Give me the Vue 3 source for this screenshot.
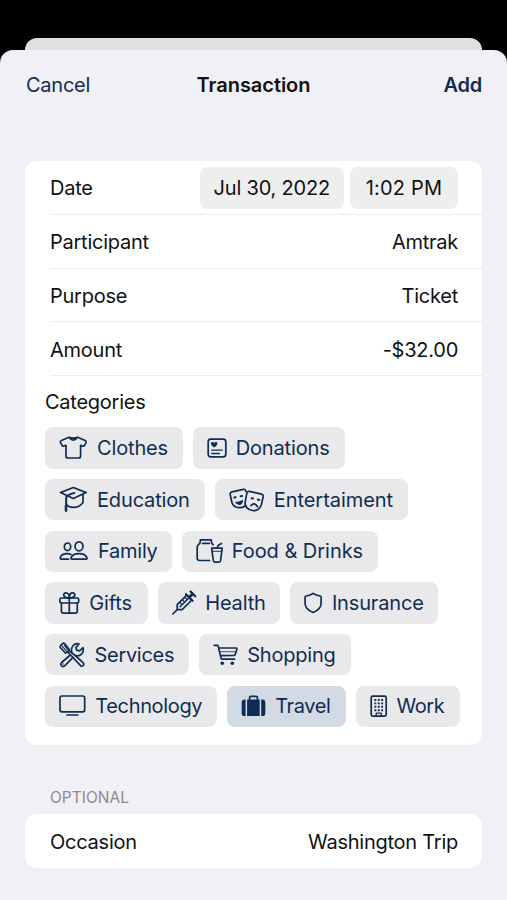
<script setup>
const rows = [
  { label: 'Participant', value: 'Amtrak' },
  { label: 'Purpose', value: 'Ticket' },
  { label: 'Amount', value: '-$32.00' }
]

// w: chip width, i: icon column width, s: letter spacing
const chipRows = [
  [
    { name: 'Clothes', w: 138, i: 38, s: -0.15 },
    { name: 'Donations', w: 152, i: 28.5, s: -0.15 }
  ],
  [
    { name: 'Education', w: 159.5, i: 38, s: -0.15 },
    { name: 'Entertaiment', w: 193, i: 45, s: -0.05 }
  ],
  [
    { name: 'Family', w: 127, i: 39, s: -0.25 },
    { name: 'Food & Drinks', w: 195.5, i: 35.5, s: -0.03 }
  ],
  [
    { name: 'Gifts', w: 102.5, i: 30.2, s: -0.15 },
    { name: 'Health', w: 122.5, i: 33.5, s: -0.15 },
    { name: 'Insurance', w: 147.5, i: 27.5, s: -0.15 }
  ],
  [
    { name: 'Services', w: 144, i: 35.5, s: -0.3 },
    { name: 'Shopping', w: 152, i: 34, s: -0.2 }
  ],
  [
    { name: 'Technology', w: 172, i: 36.3, s: -0.35 },
    { name: 'Travel', w: 118.5, i: 34, s: -0.4, selected: true },
    { name: 'Work', w: 104, i: 26.5, s: -0.35 }
  ]
]

const icons = {
  Clothes:
    '<path d="M10 3.2 2.4 6.5Q1 7.2 1.5 8.6L3.2 11.6Q3.7 12.5 4.6 12.1L7 11.3V22Q7 24 9 24H19.6Q21.6 24 21.6 22V11.3L24 12.1Q25 12.5 25.4 11.6L27 8.6Q27.5 7.2 26.2 6.5L18.6 3.2Q14.3 9.2 10 3.2ZM10 3.2Q14.3 5 18.6 3.2"/>',
  Donations:
    '<rect x="1.2" y="5.2" width="17.600" height="17.600" rx="2.500"/><path stroke-width="1.300" d="M4.700 16.200H15.200M4.700 19.500H12.500"/><path class="fill" d="M7.200 13.500C1.700 9.800 4.300 6.400 7.200 8.700C10.100 6.400 12.700 9.800 7.200 13.500Z"/>',
  Education:
    '<path d="M1.500 6.600 14.300 1.500 27.200 6.600 14.300 12.600ZM7.300 10V18.500Q10 21.400 14.400 21.400Q20.500 21.400 24 16.500V8.500M15.500 6.800Q8 8.500 7 12V24.800"/><path stroke-width="2.600" d="M7 20V24.500"/>',
  Entertaiment:
    '<path d="M17 5.500Q16.600 3 14.300 3.300L3 5.800Q.8 6.300 1.200 8.500L2.900 16.500Q4.500 21.400 10 21.700Q13.500 21.900 16 20"/><path d="M20.500 5.400Q18.300 5 17.800 7.300L16.100 16.500Q15.900 23.200 23.500 24.500Q29.800 25.200 32.300 19L34.200 10.500Q34.500 8.600 32.400 8.100Z"/><path stroke-width="2" d="M5.300 11.500 6.700 11.200M11.700 10.200 13.100 9.900M22.600 12.200 24 12.500M28.800 13.600 30.200 13.900"/><path d="M22 19.600Q25.400 15.700 28.500 20.700"/><path class="fill" d="M5.600 15.800Q10 16.300 14.100 13.800Q14 18.700 10.700 18.900Q7.600 19.100 5.600 15.800Z"/>',
  Family:
    '<ellipse cx="8.500" cy="9.800" rx="3.200" ry="3.800"/><ellipse cx="20" cy="9.300" rx="4" ry="4.500"/><path d="M9.500 22.200H2.400Q1 22.200 1.300 20.500Q2.500 16.700 8.500 16.700Q10.500 16.700 12 17.400M13 22.200H27Q28.400 22.200 27.900 20.600Q26.200 16.700 20 16.700Q13.800 16.700 12.100 20.600Q11.600 22.200 13 22.200Z"/>',
  'Food & Drinks':
    '<path d="M13.500 23.500H3.500Q1.200 23.500 1.200 21.200V10.500Q1.200 8.500 2.800 7.300Q4.300 6.300 4.300 4.500V2.800H15.300V4.500Q15.300 6.500 17.200 7.700M6.500 6.300H13.300M15.700 11.200H26.200L24.600 23.500Q24.400 25.100 22.900 25.100H19Q17.500 25.100 17.300 23.500ZM21.200 11 22 8.500 25.500 6.500"/><path d="M16.200 14.300H25.700" stroke-width="1.100"/>',
  Gifts:
    '<rect x=".9" y="9" width="18.800" height="5" rx="1.500"/><path d="M2.400 14V22Q2.400 24.100 4.500 24.100H16.200Q18.300 24.100 18.300 22V14M10.300 9V24M10.300 9C3.500 9.400 3.500 3.900 7 3.900C9.300 3.900 10.300 6.500 10.300 9C10.300 6.500 11.300 3.900 13.600 3.900C17.100 3.900 17.100 9.400 10.300 9"/>',
  Health:
    '<path d="M.8 25 5.200 20.600M14.200 6.600 5.200 15.600V20.600H10.200L19.300 11.500"/><path stroke-width="2.800" d="M17.500 8.100 20.700 4.900"/><path stroke-width="2.300" d="M14 5.300 20.500 11.800M18.500 2.500 23.200 7.200"/><path stroke-width="1.500" d="M16.200 9.600 8 17.800"/><path stroke-width="1.100" d="M10.500 11 12.200 12.700M13 8.500 14.700 10.200M8 13.500 9.700 15.200"/>',
  Insurance:
    '<path d="M9.100 4.300Q6.500 6.400 2.200 7Q1.100 7.200 1.100 8.300V14.500Q1.100 20.200 9.100 23.500Q17.100 20.200 17.100 14.500V8.300Q17.100 7.200 16 7Q11.700 6.400 9.100 4.300Z"/>',
  Services:
    '<path d="M11.300 14 2.600 21.500Q1 23.200 2.600 24.800Q4.200 26.300 5.900 24.700L14 16.300M16.500 14.700Q20.300 15.500 22.800 12.800Q25.100 10.200 24 6.700L20.600 9.900 17.600 9.200 16.900 6.300 20.100 3Q16.600 2 14.200 4.500Q11.700 7.300 12.800 11"/><path d="M6.600 12.300 1.500 6.700Q.7 5.700 1.600 4.700L3.600 2.600Q4.600 1.700 5.600 2.600L10.300 8.600Q9.400 11.300 6.600 12.300ZM9 11.500 13.500 16 21.600 24.700Q23 25.700 24.200 24.500Q25.300 23.300 24.300 21.900L16.200 14.500 10 9.800"/><path stroke-width="1.200" d="M3.300 5.400 7.500 10.200M5.200 4.200 9 8.900M3.900 23H4.500"/>',
  Shopping:
    '<path d="M1.200 4.300H4.200Q5 4.300 5.200 5.100L8 17Q8.300 18.200 9.500 18.200H21.500M5.700 7H23.100Q24.200 7 23.900 8.200L22.300 13.200Q22 14.200 20.800 14.300L7.500 14.700"/><path stroke-width=".8" d="M6.500 10.700H22.500"/><circle class="fill" cx="9.300" cy="22.200" r="1.800"/><circle class="fill" cx="19.300" cy="22.200" r="1.800"/>',
  Technology:
    '<rect x="1" y="4" width="24.700" height="15.800" rx="2"/><path d="M8 23H18.800"/>',
  Travel:
    '<path class="fill" d="M6.100 7.600H18.700V24.100H6.100ZM4.600 7.600V24.100H3.500Q.7 24.100.7 21.200V10.500Q.7 7.600 3.500 7.600ZM20.200 7.600V24.100H21.500Q24.300 24.100 24.300 21.200V10.500Q24.300 7.600 21.500 7.600Z"/><path d="M8.600 8V5.600Q8.600 4.300 9.900 4.300H15.100Q16.400 4.300 16.400 5.600V8"/>',
  Work:
    '<rect x="1.200" y="4.100" width="15" height="20" rx="1.500"/><path stroke-width="1.900" stroke-linecap="butt" d="M4.400 8H6.300M7.800 8H9.700M11.200 8H13.100M4.400 11.400H6.300M7.800 11.400H9.700M11.200 11.400H13.100M4.400 14.800H6.300M7.800 14.800H9.700M11.200 14.800H13.100M4.400 18.200H6.300M7.800 18.200H9.700M11.200 18.200H13.100"/><path stroke-width="1.300" d="M6.200 24V21.200H11.300V24"/>'
}
</script>

<template>
  <div class="screen">
    <div class="behind"></div>
    <main class="sheet">
      <header class="nav">
        <span class="cancel">Cancel</span>
        <h1 class="title">Transaction</h1>
        <span class="add">Add</span>
      </header>

      <section class="card">
        <div class="row date-row">
          <span>Date</span>
          <div class="pickers">
            <span class="picker day">Jul 30, 2022</span>
            <span class="picker time">1:02 PM</span>
          </div>
        </div>
        <div v-for="r in rows" :key="r.label" class="row">
          <span>{{ r.label }}</span>
          <span>{{ r.value }}</span>
        </div>
        <div class="categories">
          <h2 class="heading">Categories</h2>
          <div class="chips">
            <div v-for="(line, n) in chipRows" :key="n" class="chip-line">
              <div
                v-for="c in line"
                :key="c.name"
                class="chip"
                :class="{ selected: c.selected }"
                :style="{ width: c.w + 'px', letterSpacing: c.s + 'px' }"
              >
                <svg class="icon" :width="c.i" height="28" :viewBox="`0 0 ${c.i} 28`" v-html="icons[c.name]"></svg>
                <span>{{ c.name }}</span>
              </div>
            </div>
          </div>
        </div>
      </section>

      <h3 class="section-label">OPTIONAL</h3>
      <section class="card">
        <div class="row last">
          <span>Occasion</span>
          <span>Washington Trip</span>
        </div>
      </section>
    </main>
  </div>
</template>

<style>
body {
  background: #000;
}
</style>

<style scoped>
.screen {
  box-sizing: border-box;
  height: 900px;
  padding-top: 38px;
  overflow: hidden;
  display: flex;
  flex-direction: column;
  background: #000;
  color: #111;
  font-family: Inter, "Liberation Sans", sans-serif;
  font-size: 20px;
  letter-spacing: -0.25px;
}
.behind {
  flex: none;
  height: 12px;
  margin: 0 25px;
  border-radius: 12px 12px 0 0;
  background: #e0e0e0;
}
.sheet {
  flex: 1;
  padding: 0 25px;
  border-radius: 13px 13px 0 0;
  background: #f1f0f6;
}
.nav {
  display: grid;
  grid-template-columns: 1fr auto 1fr;
  align-items: center;
  height: 69px;
  margin-bottom: 42px;
  color: #0f2d54;
}
.cancel {
  padding-left: 1px;
}
.title {
  margin: 0;
  font-size: 20px;
  font-weight: 600;
  letter-spacing: -0.05px;
  color: #111;
}
.add {
  text-align: right;
  font-weight: 600;
}
.card {
  border-radius: 12px;
  background: #fff;
}
.row {
  box-sizing: border-box;
  height: 53.8px;
  margin-left: 25px;
  padding: 2px 24px 0 0;
  display: flex;
  align-items: center;
  justify-content: space-between;
  border-bottom: 1.5px solid #ececed;
}
.row.last {
  border-bottom: 0;
}
.pickers {
  display: flex;
  gap: 6px;
}
.picker {
  height: 42px;
  line-height: 42px;
  border-radius: 8px;
  background: #eeeeef;
  text-align: center;
}
.day {
  width: 144.5px;
}
.time {
  width: 108px;
  letter-spacing: 0.2px;
}
.day {
  letter-spacing: -0.2px;
}
.categories {
  padding: 14px 0 18px 20px;
}
.heading {
  margin: 0 0 12px;
  font-size: 20px;
  font-weight: 400;
  line-height: 25px;
}
.chips {
  display: flex;
  flex-direction: column;
  gap: 10.2px;
}
.chip-line {
  display: flex;
  gap: 10.2px;
}
.chip {
  box-sizing: border-box;
  flex: none;
  height: 41.5px;
  padding-left: 14px;
  display: flex;
  align-items: center;
  border-radius: 8px;
  background: #e9e9eb;
  color: #0f2d54;
  white-space: nowrap;
}
.chip.selected {
  background: #d2dae3;
}
.icon {
  flex: none;
  fill: none;
  stroke: #0f2d54;
  stroke-width: 1.7;
  stroke-linecap: round;
  stroke-linejoin: round;
}
.icon :deep(.fill) {
  fill: #0f2d54;
  stroke: none;
}
.section-label {
  margin: 44px 0 7px 25px;
  font-size: 15.5px;
  font-weight: 400;
  line-height: 18px;
  letter-spacing: 0;
  color: #8b8b90;
}
</style>
